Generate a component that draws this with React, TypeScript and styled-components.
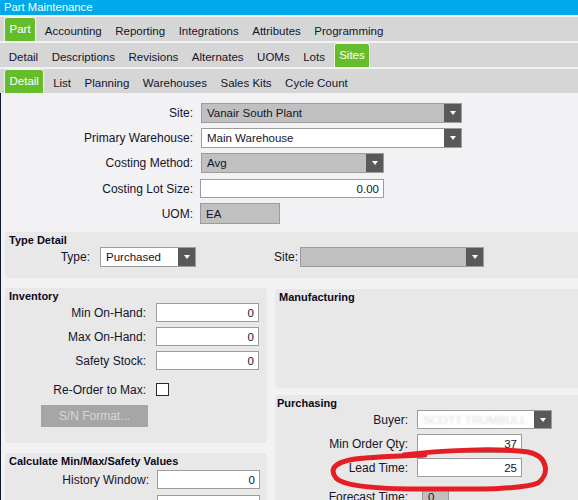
import React from "react";
import styled, { createGlobalStyle } from "styled-components";

const Global = createGlobalStyle`
  html, body { margin: 0; padding: 0; background: #F2F2F4; }
  body { font-family: "Liberation Sans", Arial, sans-serif; font-size: 11.5px; color: #14142A; }
`;

const Window = styled.div`
  position: relative;
  width: 578px;
  height: 500px;
  overflow: hidden;
  background: #F2F2F4;
  display: flex;
  flex-direction: column;
`;

const TitleBar = styled.div`
  height: 15px;
  background: #00A9EA;
  color: #fff;
  padding-left: 4px;
  line-height: 14px;
  font-size: 11.3px;
  flex: none;
`;

const TabRow = styled.div`
  display: flex;
  align-items: stretch;
  height: 24px;
  margin-top: 2px;
  background: #D6D6D6;
  padding-left: 2px;
  flex: none;
`;

const Tab = styled.div<{ $active?: boolean }>`
  display: flex;
  align-items: center;
  box-sizing: border-box;
  white-space: nowrap;
  color: ${(p) => (p.$active ? "#fff" : "#14142A")};
  background: ${(p) => (p.$active ? "#67BC2B" : "transparent")};
  padding: ${(p) => (p.$active ? "0 4.5px 1px" : "4px 6.75px 0")};
  margin: ${(p) => (p.$active ? "0 2px" : "0")};
  border: ${(p) => (p.$active ? "1px solid #E9F5E0" : "none")};
  border-bottom: none;
  border-radius: ${(p) => (p.$active ? "3px 3px 0 0" : "0")};
`;

const Content = styled.div`
  flex: 1;
  border-left: 1px solid #0E1A2B;
  padding-left: 4px;
  display: flex;
  flex-direction: column;
`;

const MainForm = styled.div`
  display: flex;
  flex-direction: column;
  gap: 5px;
  padding-top: 10px;
`;

const Row = styled.div<{ $h?: number; $mt?: number }>`
  display: flex;
  align-items: center;
  height: ${(p) => p.$h ?? 19}px;
  margin-top: ${(p) => p.$mt ?? 0}px;
`;

const Label = styled.div<{ $w: number; $gap?: number }>`
  width: ${(p) => p.$w}px;
  margin-right: ${(p) => p.$gap ?? 8}px;
  text-align: right;
  white-space: nowrap;
  font-size: 12px;
  flex: none;
`;

const SelectBox = styled.div<{ $w: number; $h?: number; $gray?: boolean; $ml?: number }>`
  display: flex;
  box-sizing: border-box;
  width: ${(p) => p.$w}px;
  height: ${(p) => p.$h ?? 20}px;
  margin-left: ${(p) => p.$ml ?? 0}px;
  border: 1px solid #9C9C9C;
  background: ${(p) => (p.$gray ? "#C0C0C0" : "#FFFFFF")};
  flex: none;
`;

const SelectText = styled.div<{ $faded?: boolean }>`
  flex: 1;
  display: flex;
  align-items: center;
  padding-left: 5px;
  white-space: nowrap;
  overflow: hidden;
  color: ${(p) => (p.$faded ? "#DADADA" : "#14142A")};
  filter: ${(p) => (p.$faded ? "blur(0.8px)" : "none")};
`;

const SelectBtn = styled.div`
  width: 17px;
  background: #595959;
  display: flex;
  align-items: center;
  justify-content: center;
  flex: none;
`;

const Caret = styled.span`
  width: 0;
  height: 0;
  border-left: 3.5px solid transparent;
  border-right: 3.5px solid transparent;
  border-top: 4px solid #fff;
`;

const TextBox = styled.div<{ $w: number; $h?: number; $gray?: boolean; $left?: boolean; $ml?: number }>`
  box-sizing: border-box;
  width: ${(p) => p.$w}px;
  height: ${(p) => p.$h ?? 19}px;
  margin-left: ${(p) => p.$ml ?? 0}px;
  border: 1px solid #9C9C9C;
  background: ${(p) => (p.$gray ? "#C0C0C0" : "#FFFFFF")};
  display: flex;
  align-items: center;
  justify-content: ${(p) => (p.$left ? "flex-start" : "flex-end")};
  padding: 0 4px 0 5px;
  flex: none;
`;

const Panel = styled.div<{ $h?: number; $bleed?: boolean }>`
  background: #E8E8E8;
  border-radius: 4px;
  box-sizing: border-box;
  padding-top: 1px;
  height: ${(p) => (p.$h ? `${p.$h}px` : "auto")};
  margin-right: ${(p) => (p.$bleed ? "-8px" : "0")};
  display: flex;
  flex-direction: column;
`;

const PanelTitle = styled.div<{ $pl?: number }>`
  font-weight: bold;
  font-size: 11px;
  line-height: 14px;
  padding-left: ${(p) => p.$pl ?? 4}px;
  color: #0A0A1A;
`;

const TypePanel = styled(Panel)`
  margin-top: 8px;
  height: 46px;
`;

const TypeRow = styled.div`
  display: flex;
  align-items: center;
  height: 20px;
`;

const Columns = styled.div`
  display: grid;
  grid-template-columns: 262px 1fr;
  column-gap: 8px;
  margin-top: 10px;
`;

const Column = styled.div<{ $gap: number; $pt?: number }>`
  display: flex;
  flex-direction: column;
  gap: ${(p) => p.$gap}px;
  padding-top: ${(p) => p.$pt ?? 0}px;
  min-width: 0;
`;

const FieldStack = styled.div<{ $mt?: number; $gap?: number }>`
  display: flex;
  flex-direction: column;
  gap: ${(p) => p.$gap ?? 5}px;
  margin-top: ${(p) => p.$mt ?? 0}px;
`;

const Check = styled.div`
  width: 13px;
  height: 13px;
  box-sizing: border-box;
  border: 1px solid #2A2A2A;
  background: #fff;
`;

const DisabledButton = styled.div`
  margin: 9px 0 0 36px;
  width: 107px;
  height: 22px;
  background: #A6A6A6;
  color: #D6D6D6;
  font-size: 12px;
  display: flex;
  align-items: center;
  justify-content: center;
`;

const Annotation = styled.svg`
  position: absolute;
  left: 0;
  top: 0;
  pointer-events: none;
`;

export default function App() {
  return (
    <>
      <Global />
      <Window>
        <TitleBar>Part Maintenance</TitleBar>
        <TabRow>
          <Tab $active>Part</Tab>
          <Tab>Accounting</Tab>
          <Tab>Reporting</Tab>
          <Tab>Integrations</Tab>
          <Tab>Attributes</Tab>
          <Tab>Programming</Tab>
        </TabRow>
        <TabRow>
          <Tab>Detail</Tab>
          <Tab>Descriptions</Tab>
          <Tab>Revisions</Tab>
          <Tab>Alternates</Tab>
          <Tab>UOMs</Tab>
          <Tab>Lots</Tab>
          <Tab $active>Sites</Tab>
        </TabRow>
        <TabRow>
          <Tab $active>Detail</Tab>
          <Tab>List</Tab>
          <Tab>Planning</Tab>
          <Tab>Warehouses</Tab>
          <Tab>Sales Kits</Tab>
          <Tab>Cycle Count</Tab>
        </TabRow>
        <Content>
          <MainForm>
            <Row $h={20}>
              <Label $w={188}>Site:</Label>
              <SelectBox $w={261} $gray>
                <SelectText>Vanair South Plant</SelectText>
                <SelectBtn><Caret /></SelectBtn>
              </SelectBox>
            </Row>
            <Row $h={20}>
              <Label $w={188}>Primary Warehouse:</Label>
              <SelectBox $w={261}>
                <SelectText>Main Warehouse</SelectText>
                <SelectBtn><Caret /></SelectBtn>
              </SelectBox>
            </Row>
            <Row $h={20}>
              <Label $w={188}>Costing Method:</Label>
              <SelectBox $w={183} $gray>
                <SelectText>Avg</SelectText>
                <SelectBtn><Caret /></SelectBtn>
              </SelectBox>
            </Row>
            <Row $h={19} $mt={1}>
              <Label $w={188} $gap={7}>Costing Lot Size:</Label>
              <TextBox $w={184}>0.00</TextBox>
            </Row>
            <Row $h={21}>
              <Label $w={188} $gap={7}>UOM:</Label>
              <TextBox $w={80} $h={21} $gray $left>EA</TextBox>
            </Row>
          </MainForm>

          <TypePanel $bleed>
            <PanelTitle>Type Detail</PanelTitle>
            <TypeRow>
              <Label $w={85} $gap={10}>Type:</Label>
              <SelectBox $w={96}>
                <SelectText>Purchased</SelectText>
                <SelectBtn><Caret /></SelectBtn>
              </SelectBox>
              <Label $w={102} $gap={2}>Site:</Label>
              <SelectBox $w={184} $gray>
                <SelectText></SelectText>
                <SelectBtn><Caret /></SelectBtn>
              </SelectBox>
            </TypeRow>
          </TypePanel>

          <Columns>
            <Column $gap={10}>
              <Panel $h={155}>
                <PanelTitle>Inventory</PanelTitle>
                <FieldStack>
                  <Row>
                    <Label $w={141} $gap={10}>Min On-Hand:</Label>
                    <TextBox $w={103}>0</TextBox>
                  </Row>
                  <Row>
                    <Label $w={141} $gap={10}>Max On-Hand:</Label>
                    <TextBox $w={103}>0</TextBox>
                  </Row>
                  <Row>
                    <Label $w={141} $gap={10}>Safety Stock:</Label>
                    <TextBox $w={103}>0</TextBox>
                  </Row>
                </FieldStack>
                <Row $h={13} $mt={13}>
                  <Label $w={141} $gap={10}>Re-Order to Max:</Label>
                  <Check />
                </Row>
                <DisabledButton>S/N Format...</DisabledButton>
              </Panel>
              <Panel>
                <PanelTitle>Calculate Min/Max/Safety Values</PanelTitle>
                <FieldStack $mt={2} $gap={6}>
                  <Row>
                    <Label $w={144} $gap={8}>History Window:</Label>
                    <TextBox $w={103}>0</TextBox>
                  </Row>
                  <Row $h={20}>
                    <Label $w={144} $gap={8}></Label>
                    <TextBox $w={103} $h={20}>0</TextBox>
                  </Row>
                </FieldStack>
              </Panel>
            </Column>
            <Column $gap={7} $pt={1}>
              <Panel $h={99} $bleed>
                <PanelTitle>Manufacturing</PanelTitle>
              </Panel>
              <Panel $bleed>
                <PanelTitle $pl={2}>Purchasing</PanelTitle>
                <FieldStack>
                  <Row>
                    <Label $w={133} $gap={9}>Buyer:</Label>
                    <SelectBox $w={135} $h={19}>
                      <SelectText $faded>SCOTT TRUMBULL</SelectText>
                      <SelectBtn><Caret /></SelectBtn>
                    </SelectBox>
                  </Row>
                  <Row>
                    <Label $w={133} $gap={9}>Min Order Qty:</Label>
                    <TextBox $w={105}>37</TextBox>
                  </Row>
                  <Row>
                    <Label $w={133} $gap={9}>Lead Time:</Label>
                    <TextBox $w={105}>25</TextBox>
                  </Row>
                  <Row $mt={5}>
                    <Label $w={133} $gap={9}>Forecast Time:</Label>
                    <TextBox $w={27} $gray $left $ml={5}>0</TextBox>
                  </Row>
                </FieldStack>
              </Panel>
            </Column>
          </Columns>
        </Content>
        <Annotation width="578" height="500" viewBox="0 0 578 500">
          <path
            d="M 404 455 C 440 450, 500 448, 528 452 C 548 456, 550 474, 538 483 C 522 490, 470 489, 420 489 C 380 489, 345 487, 336 478 C 328 468, 336 460, 365 458 C 385 456, 400 456, 425 455"
            fill="none"
            stroke="#E41E24"
            strokeWidth="5"
            strokeLinecap="round"
            strokeLinejoin="round"
          />
        </Annotation>
      </Window>
    </>
  );
}
